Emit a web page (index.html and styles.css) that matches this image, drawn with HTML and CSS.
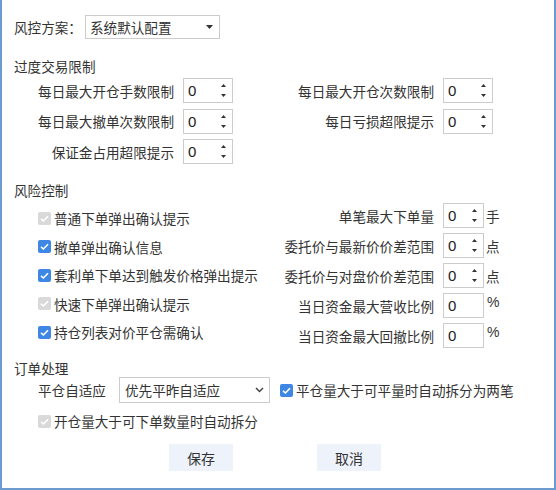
FILE: index.html
```html
<!DOCTYPE html>
<html lang="zh-CN">
<head>
<meta charset="utf-8">
<title>风控方案</title>
<link rel="stylesheet" href="styles.css">
</head>
<body>
<div class="dialog">
  <div class="scheme">
    <span class="scheme-label">风控方案：</span>
    <div class="select select-scheme">
      <span>系统默认配置</span>
      <svg class="caret" width="7" height="4" viewBox="0 0 7 4"><path d="M0 0H7L3.5 4Z" fill="#333"/></svg>
    </div>
  </div>

  <div class="section-title first">过度交易限制</div>
  <div class="limit-grid">
    <span class="lbl">每日最大开仓手数限制</span>
    <div class="spin"><span>0</span><svg class="arrows" width="7" height="17" viewBox="0 0 7 17"><path d="M1 5L3.5 2L6 5Z M1 12L3.5 15L6 12Z" fill="#333"/></svg></div>
    <span class="lbl">每日最大开仓次数限制</span>
    <div class="spin"><span>0</span><svg class="arrows" width="7" height="17" viewBox="0 0 7 17"><path d="M1 5L3.5 2L6 5Z M1 12L3.5 15L6 12Z" fill="#333"/></svg></div>

    <span class="lbl">每日最大撤单次数限制</span>
    <div class="spin"><span>0</span><svg class="arrows" width="7" height="17" viewBox="0 0 7 17"><path d="M1 5L3.5 2L6 5Z M1 12L3.5 15L6 12Z" fill="#333"/></svg></div>
    <span class="lbl">每日亏损超限提示</span>
    <div class="spin"><span>0</span><svg class="arrows" width="7" height="17" viewBox="0 0 7 17"><path d="M1 5L3.5 2L6 5Z M1 12L3.5 15L6 12Z" fill="#333"/></svg></div>

    <span class="lbl">保证金占用超限提示</span>
    <div class="spin"><span>0</span><svg class="arrows" width="7" height="17" viewBox="0 0 7 17"><path d="M1 5L3.5 2L6 5Z M1 12L3.5 15L6 12Z" fill="#333"/></svg></div>
  </div>

  <div class="section-title risk-title">风险控制</div>
  <div class="risk">
    <div class="risk-checks">
      <div class="check-row"><span class="cb disabled"><svg viewBox="0 0 13 13"><path d="M3 6.8L5.4 9L10 4.2" fill="none" stroke="#fff" stroke-width="1.6"/></svg></span><span>普通下单弹出确认提示</span></div>
      <div class="check-row"><span class="cb checked"><svg viewBox="0 0 13 13"><path d="M3 6.8L5.4 9L10 4.2" fill="none" stroke="#fff" stroke-width="1.6"/></svg></span><span>撤单弹出确认信息</span></div>
      <div class="check-row"><span class="cb checked"><svg viewBox="0 0 13 13"><path d="M3 6.8L5.4 9L10 4.2" fill="none" stroke="#fff" stroke-width="1.6"/></svg></span><span>套利单下单达到触发价格弹出提示</span></div>
      <div class="check-row"><span class="cb disabled"><svg viewBox="0 0 13 13"><path d="M3 6.8L5.4 9L10 4.2" fill="none" stroke="#fff" stroke-width="1.6"/></svg></span><span>快速下单弹出确认提示</span></div>
      <div class="check-row"><span class="cb checked"><svg viewBox="0 0 13 13"><path d="M3 6.8L5.4 9L10 4.2" fill="none" stroke="#fff" stroke-width="1.6"/></svg></span><span>持仓列表对价平仓需确认</span></div>
    </div>
    <div class="risk-grid">
      <span class="lbl">单笔最大下单量</span>
      <div class="spin"><span>0</span><svg class="arrows" width="7" height="17" viewBox="0 0 7 17"><path d="M1 5L3.5 2L6 5Z M1 12L3.5 15L6 12Z" fill="#333"/></svg></div>
      <span class="unit">手</span>

      <span class="lbl">委托价与最新价价差范围</span>
      <div class="spin"><span>0</span><svg class="arrows" width="7" height="17" viewBox="0 0 7 17"><path d="M1 5L3.5 2L6 5Z M1 12L3.5 15L6 12Z" fill="#333"/></svg></div>
      <span class="unit">点</span>

      <span class="lbl">委托价与对盘价价差范围</span>
      <div class="spin"><span>0</span><svg class="arrows" width="7" height="17" viewBox="0 0 7 17"><path d="M1 5L3.5 2L6 5Z M1 12L3.5 15L6 12Z" fill="#333"/></svg></div>
      <span class="unit">点</span>

      <span class="lbl">当日资金最大营收比例</span>
      <div class="spin"><span>0</span></div>
      <span class="unit pct">%</span>

      <span class="lbl">当日资金最大回撤比例</span>
      <div class="spin"><span>0</span></div>
      <span class="unit pct">%</span>
    </div>
  </div>

  <div class="section-title order-title">订单处理</div>
  <div class="order-row">
    <span class="order-label">平仓自适应</span>
    <div class="select select-order">
      <span>优先平昨自适应</span>
      <svg class="chev" width="9" height="6" viewBox="0 0 9 6"><path d="M1 1L4.5 4.5L8 1" fill="none" stroke="#444" stroke-width="1.5"/></svg>
    </div>
    <div class="check-row inline"><span class="cb checked"><svg viewBox="0 0 13 13"><path d="M3 6.8L5.4 9L10 4.2" fill="none" stroke="#fff" stroke-width="1.6"/></svg></span><span>平仓量大于可平量时自动拆分为两笔</span></div>
  </div>
  <div class="check-row split-row"><span class="cb disabled"><svg viewBox="0 0 13 13"><path d="M3 6.8L5.4 9L10 4.2" fill="none" stroke="#fff" stroke-width="1.6"/></svg></span><span>开仓量大于可下单数量时自动拆分</span></div>

  <div class="buttons">
    <button class="btn">保存</button>
    <button class="btn">取消</button>
  </div>
</div>
</body>
</html>
```

FILE: styles.css
```css
html, body {
  margin: 0;
  padding: 0;
  background: #ffffff;
}

body {
  font-family: "Noto Sans CJK SC", "Microsoft YaHei", sans-serif;
  font-size: 13.6px;
  color: #333333;
}

.dialog {
  box-sizing: border-box;
  width: 556px;
  height: 490px;
  border-left: 2px solid #6c9bd0;
  border-right: 2px solid #6c9bd0;
  border-bottom: 2px solid #6c9bd0;
  background: #ffffff;
  padding: 15px 0 0 12px;
}

.scheme {
  display: flex;
  align-items: center;
  height: 24px;
}

.scheme-label {
  width: 71px;
  font-size: 13.6px;
}

.select {
  box-sizing: border-box;
  display: flex;
  align-items: center;
  justify-content: space-between;
  border: 1px solid #cccccc;
  background: #ffffff;
}

.select-scheme {
  width: 135px;
  height: 24px;
  padding: 0 6px 0 4px;
}

.select-order {
  width: 151px;
  height: 26px;
  padding: 0 5px 0 5px;
}

.caret { display: block; }
.chev { display: block; }

.section-title {
  line-height: 20px;
  height: 20px;
}

.section-title.first { margin-top: 17px; }
.risk-title { margin-top: 16px; }
.order-title { margin-top: 11px; line-height: 18px; height: 18px; }

.limit-grid {
  margin-top: 2px;
  display: grid;
  grid-template-columns: 160px 50px 192px 50px;
  grid-auto-rows: 25px;
  column-gap: 9px;
  row-gap: 5.5px;
  align-items: center;
}

.lbl {
  text-align: right;
  white-space: nowrap;
}

.spin {
  box-sizing: border-box;
  height: 25px;
  border: 1px solid #cccccc;
  background: #ffffff;
  display: flex;
  align-items: center;
  justify-content: space-between;
  padding: 0 5px 0 4px;
  font-family: "Liberation Sans", "Noto Sans", sans-serif;
  font-size: 15px;
  color: #222;
}

.arrows { display: block; }

.risk {
  margin-top: 3px;
  display: flex;
}

.risk-checks {
  width: 240px;
  padding-left: 24px;
  padding-top: 1px;
  display: flex;
  flex-direction: column;
}

.check-row {
  display: flex;
  align-items: center;
  height: 28.5px;
  white-space: nowrap;
}

.cb {
  box-sizing: border-box;
  width: 13px;
  height: 13px;
  border-radius: 2px;
  margin-right: 3px;
  flex: none;
  display: flex;
}

.cb svg { width: 13px; height: 13px; display: block; }

.cb.checked { background: #3f87e5; }
.cb.disabled { background: #d9d9d9; }

.risk-grid {
  display: grid;
  grid-template-columns: 156px 50px auto;
  grid-auto-rows: 25px;
  row-gap: 5px;
  align-items: center;
}

.risk-grid .spin { margin-left: 9px; }
.risk-grid .unit { margin-left: 2px; }
.risk-grid .unit.pct {
  font-family: "Liberation Sans", sans-serif;
  font-size: 14px;
  margin-left: 3px;
  align-self: start;
  padding-top: 1px;
}

.order-row {
  display: flex;
  align-items: center;
  height: 26px;
  padding-left: 24px;
}

.order-label { width: 81px; }

.order-row .check-row.inline {
  margin-left: 10px;
  height: 26px;
}

.split-row {
  margin-top: 8px;
  height: 20px;
  padding-left: 24px;
}

.buttons {
  margin-top: 13px;
  display: flex;
  gap: 84px;
  padding-left: 155px;
}

.btn {
  width: 64px;
  height: 27px;
  border: none;
  background: #eef2fa;
  color: #333333;
  font-family: "Noto Sans CJK SC", sans-serif;
  font-size: 14px;
  padding: 0;
}
```
